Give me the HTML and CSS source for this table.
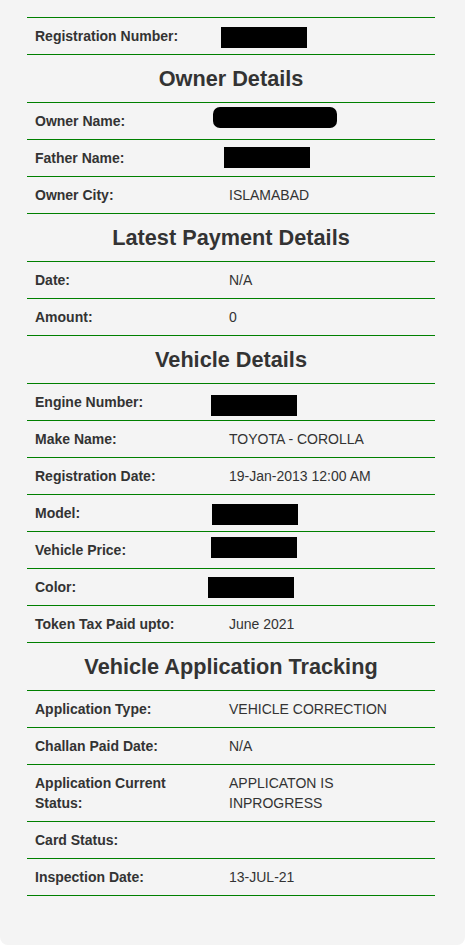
FILE: index.html
```html
<!DOCTYPE html>
<html>
<head>
<meta charset="utf-8">
<link rel="stylesheet" href="styles.css">
</head>
<body>
<div class="card">
  <div class="table">
    <div class="row"><div class="label">Registration Number:</div><div class="value"><span class="redact r-reg"></span></div></div>
    <div class="heading">Owner Details</div>
    <div class="row"><div class="label">Owner Name:</div><div class="value"><span class="redact r-owner"></span></div></div>
    <div class="row"><div class="label">Father Name:</div><div class="value"><span class="redact r-father"></span></div></div>
    <div class="row"><div class="label">Owner City:</div><div class="value">ISLAMABAD</div></div>
    <div class="heading">Latest Payment Details</div>
    <div class="row"><div class="label">Date:</div><div class="value">N/A</div></div>
    <div class="row"><div class="label">Amount:</div><div class="value">0</div></div>
    <div class="heading">Vehicle Details</div>
    <div class="row"><div class="label">Engine Number:</div><div class="value"><span class="redact r-engine"></span></div></div>
    <div class="row"><div class="label">Make Name:</div><div class="value">TOYOTA - COROLLA</div></div>
    <div class="row"><div class="label">Registration Date:</div><div class="value">19-Jan-2013 12:00 AM</div></div>
    <div class="row"><div class="label">Model:</div><div class="value"><span class="redact r-model"></span></div></div>
    <div class="row"><div class="label">Vehicle Price:</div><div class="value"><span class="redact r-price"></span></div></div>
    <div class="row"><div class="label">Color:</div><div class="value"><span class="redact r-color"></span></div></div>
    <div class="row"><div class="label">Token Tax Paid upto:</div><div class="value">June 2021</div></div>
    <div class="heading">Vehicle Application Tracking</div>
    <div class="row"><div class="label">Application Type:</div><div class="value">VEHICLE CORRECTION</div></div>
    <div class="row"><div class="label">Challan Paid Date:</div><div class="value">N/A</div></div>
    <div class="row"><div class="label">Application Current Status:</div><div class="value">APPLICATON IS INPROGRESS</div></div>
    <div class="row"><div class="label">Card Status:</div><div class="value"></div></div>
    <div class="row"><div class="label">Inspection Date:</div><div class="value">13-JUL-21</div></div>
  </div>
</div>
</body>
</html>
```

FILE: styles.css
```css
html, body {
  margin: 0;
  padding: 0;
  background: #ffffff;
}
body {
  font-family: "Liberation Sans", Arial, sans-serif;
  color: #333333;
}
.card {
  width: 465px;
  height: 945px;
  box-sizing: border-box;
  background: #f4f4f4;
  border-radius: 0 0 8px 8px;
  padding: 17px 30px 0 27px;
}
.table {
  border-top: 1px solid #008000;
}
.row {
  position: relative;
  display: grid;
  grid-template-columns: 194px 1fr;
  border-bottom: 1px solid #008000;
}
.label {
  padding: 8px 8px;
  font-size: 14px;
  line-height: 20px;
  font-weight: bold;
  color: #333333;
}
.value {
  padding: 8px 8px;
  font-size: 14px;
  line-height: 20px;
  color: #333333;
  min-height: 20px;
}
.heading {
  padding: 8px 0;
  font-size: 21.7px;
  line-height: 31px;
  font-weight: bold;
  text-align: center;
  color: #333333;
  border-bottom: 1px solid #008000;
}
.redact {
  position: absolute;
  height: 21px;
  width: 86px;
  background: #000000;
}
.r-reg { left: 194px; top: 9px; }
.r-owner { left: 186px; top: 4px; width: 124px; border-radius: 7px; }
.r-father { left: 197px; top: 7px; }
.r-engine { left: 184px; top: 11px; }
.r-model { left: 185px; top: 9px; }
.r-price { left: 184px; top: 5px; }
.r-color { left: 181px; top: 8px; }
```
